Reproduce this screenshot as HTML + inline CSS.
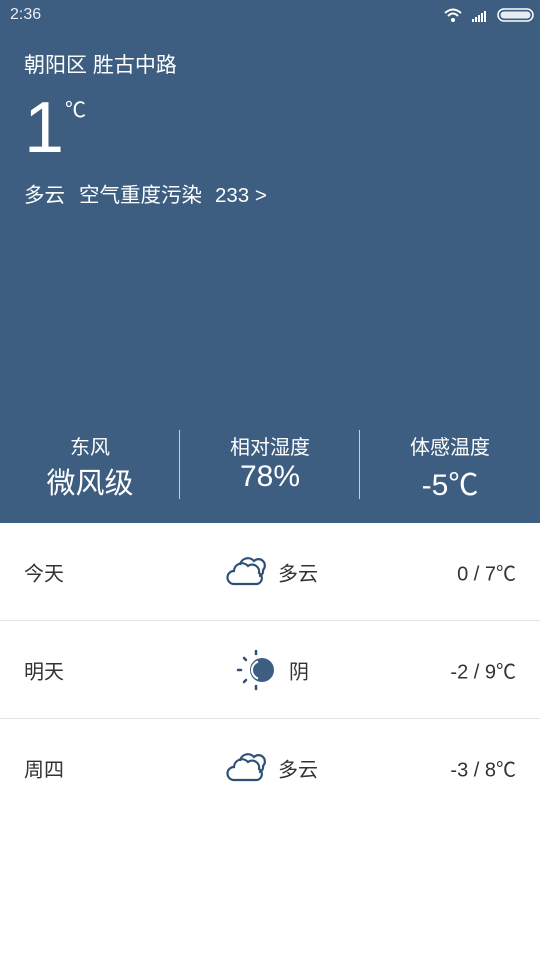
<!DOCTYPE html>
<html><head><meta charset="utf-8"><style>
*{margin:0;padding:0;box-sizing:border-box}
body{width:540px;height:960px;background:#fff;font-family:"Liberation Sans","Noto Sans CJK SC",sans-serif;position:relative;overflow:hidden}
.top{position:absolute;left:0;top:0;width:540px;height:523px;background:#3d5e80;color:#fff}
.a{position:absolute;white-space:nowrap}
.row{position:absolute;left:0;width:540px;height:98px;border-bottom:1px solid #e2e2e2;color:#333;font-size:20px}
.row .a{top:50%;transform:translateY(-50%)}
</style></head><body>
<div class="top">
<div class="a" style="left:10px;top:6px;font-size:16px;color:#e8edf2">2:36</div>
<svg class="a" style="left:443px;top:7px" width="92" height="18" viewBox="0 0 92 18">
<path d="M2 6 Q10 -1 18 6" stroke="#fff" stroke-width="2" fill="none"/><path d="M5 9 Q10 4 15 9" stroke="#fff" stroke-width="2" fill="none"/><circle cx="10" cy="13" r="2" fill="#fff"/>
<rect x="29" y="12" width="2" height="3" fill="#fff"/><rect x="32" y="10" width="2" height="5" fill="#fff"/><rect x="35" y="8" width="2" height="7" fill="#fff"/><rect x="38" y="6" width="2" height="9" fill="#fff"/><rect x="41" y="4" width="2" height="11" fill="#fff"/>
<rect x="55" y="2" width="35" height="12" rx="6" fill="none" stroke="#fff" stroke-width="1.5"/><rect x="57.5" y="4.5" width="30" height="7" rx="3.5" fill="#e8edf2"/>
</svg>
<div class="a" style="left:24px;top:49px;font-size:21px">朝阳区 胜古中路</div>
<div class="a" style="left:24px;top:88px;font-size:72px;font-weight:300;line-height:80px">1</div>
<div class="a" style="left:65px;top:94px;font-size:21px">℃</div>
<div class="a" style="left:24px;top:178px;font-size:20.5px">多云<span style="margin-left:14px">空气重度污染</span><span style="margin-left:13px">233 &gt;</span></div>
<div class="a" style="left:0;width:180px;text-align:center;top:431px;font-size:20px">东风</div>
<div class="a" style="left:0;width:180px;text-align:center;top:460px;font-size:29px">微风级</div>
<div class="a" style="left:179px;top:430px;width:1px;height:69px;background:#c5d0dc"></div>
<div class="a" style="left:180px;width:180px;text-align:center;top:431px;font-size:20px">相对湿度</div>
<div class="a" style="left:180px;width:180px;text-align:center;top:460px;font-size:30px">78%</div>
<div class="a" style="left:359px;top:430px;width:1px;height:69px;background:#c5d0dc"></div>
<div class="a" style="left:360px;width:180px;text-align:center;top:431px;font-size:20px">体感温度</div>
<div class="a" style="left:360px;width:180px;text-align:center;top:460px;font-size:30px">-5℃</div>
</div>
<div class="row" style="top:523px">
<div class="a" style="left:24px">今天</div>
<svg class="a" style="left:226px" width="40" height="32" viewBox="0 0 40 32"><path d="M8 28 H31 A6 6 0 0 0 33 17 A7 7 0 0 0 22 10 A8 8 0 0 0 8 15 A6.5 6.5 0 0 0 8 28 Z M14 9 A8 8 0 0 1 28 5 A6 6 0 0 1 37 14 A5 5 0 0 1 33 20" fill="none" stroke="#2e5077" stroke-width="2.2"/></svg>
<div class="a" style="left:278px">多云</div>
<div class="a" style="right:24px">0 / 7℃</div>
</div>
<div class="row" style="top:621px">
<div class="a" style="left:24px">明天</div>
<svg class="a" style="left:236px" width="40" height="42" viewBox="0 0 40 42"><g stroke="#2e5077" stroke-width="2.5" stroke-linecap="round"><line x1="20" y1="2" x2="20" y2="5"/><line x1="20" y1="37" x2="20" y2="40"/><line x1="2" y1="21" x2="5" y2="21"/><line x1="8" y1="9" x2="10" y2="11"/><line x1="8" y1="33" x2="10" y2="31"/></g><circle cx="26" cy="21" r="12" fill="#3d5e80"/><path d="M22 12.5 A9 9 0 0 0 22 29.5" stroke="#fff" stroke-width="2" fill="none"/></svg>
<div class="a" style="left:289px">阴</div>
<div class="a" style="right:24px">-2 / 9℃</div>
</div>
<div class="row" style="top:719px;border:none">
<div class="a" style="left:24px">周四</div>
<svg class="a" style="left:226px" width="40" height="32" viewBox="0 0 40 32"><path d="M8 28 H31 A6 6 0 0 0 33 17 A7 7 0 0 0 22 10 A8 8 0 0 0 8 15 A6.5 6.5 0 0 0 8 28 Z M14 9 A8 8 0 0 1 28 5 A6 6 0 0 1 37 14 A5 5 0 0 1 33 20" fill="none" stroke="#2e5077" stroke-width="2.2"/></svg>
<div class="a" style="left:278px">多云</div>
<div class="a" style="right:24px">-3 / 8℃</div>
</div>
</body></html>
